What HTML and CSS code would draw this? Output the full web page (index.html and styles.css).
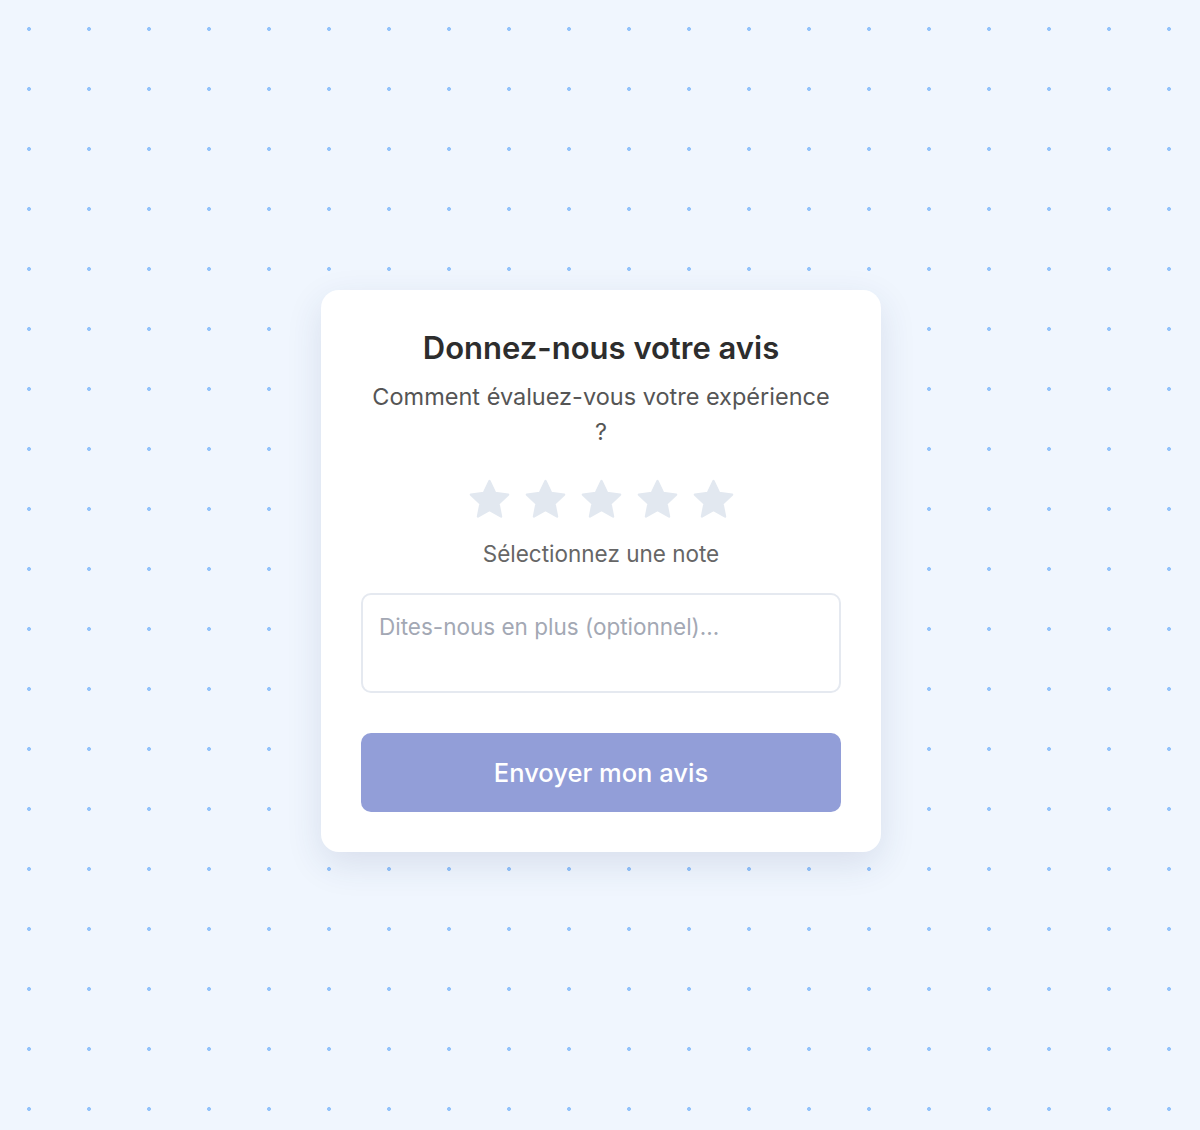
FILE: index.html
```html
<!DOCTYPE html>
<html lang="fr">
<head>
<meta charset="utf-8">
<title>Donnez-nous votre avis</title>
<link rel="stylesheet" href="styles.css">
</head>
<body>
<main class="page">
  <section class="card">
    <h1 class="title">Donnez-nous votre avis</h1>
    <p class="subtitle">Comment évaluez-vous votre expérience ?</p>
    <div class="stars">
      <svg class="star" viewBox="0 0 24 24"><path d="M12 2.6l2.9 6.1 6.6.8-4.9 4.6 1.3 6.6L12 17.4l-5.9 3.3 1.3-6.6-4.9-4.6 6.6-.8z"/></svg>
      <svg class="star" viewBox="0 0 24 24"><path d="M12 2.6l2.9 6.1 6.6.8-4.9 4.6 1.3 6.6L12 17.4l-5.9 3.3 1.3-6.6-4.9-4.6 6.6-.8z"/></svg>
      <svg class="star" viewBox="0 0 24 24"><path d="M12 2.6l2.9 6.1 6.6.8-4.9 4.6 1.3 6.6L12 17.4l-5.9 3.3 1.3-6.6-4.9-4.6 6.6-.8z"/></svg>
      <svg class="star" viewBox="0 0 24 24"><path d="M12 2.6l2.9 6.1 6.6.8-4.9 4.6 1.3 6.6L12 17.4l-5.9 3.3 1.3-6.6-4.9-4.6 6.6-.8z"/></svg>
      <svg class="star" viewBox="0 0 24 24"><path d="M12 2.6l2.9 6.1 6.6.8-4.9 4.6 1.3 6.6L12 17.4l-5.9 3.3 1.3-6.6-4.9-4.6 6.6-.8z"/></svg>
    </div>
    <p class="hint">Sélectionnez une note</p>
    <textarea class="comment" placeholder="Dites-nous en plus (optionnel)..."></textarea>
    <button class="submit" type="button">Envoyer mon avis</button>
  </section>
</main>
</body>
</html>
```
FILE: styles.css
```css
html, body {
  margin: 0;
  padding: 0;
}
body {
  font-family: Inter, "Noto Sans", sans-serif;
  background-color: #f0f6fe;
  background-image: radial-gradient(circle at center, #93c3fb 1.8px, transparent 2.2px);
  background-size: 60px 60px;
  background-position: -1px -1px;
  min-height: 100vh;
}
.page {
  min-height: 1130px;
  box-sizing: border-box;
  padding: 290px 0 0 321px;
}
.card {
  width: 560px;
  box-sizing: border-box;
  background: #fff;
  border-radius: 18px;
  padding: 40px;
  box-shadow: 0 12px 36px rgba(40, 60, 110, 0.12);
  display: flex;
  flex-direction: column;
  align-items: stretch;
  text-align: center;
}
.title {
  margin: 0;
  font-size: 31px;
  line-height: 36px;
  font-weight: 600;
  color: #2d2d2d;
}
.subtitle {
  margin: 13px 0 0;
  padding: 0 6px;
  font-size: 23.5px;
  line-height: 35px;
  color: #555;
}
.stars {
  margin-top: 27px;
  display: flex;
  justify-content: center;
  gap: 9px;
}
.star {
  width: 47px;
  height: 47px;
  display: block;
}
.star path {
  fill: #e2e8f0;
  stroke: #e2e8f0;
  stroke-width: 1.2;
  stroke-linejoin: round;
}
.hint {
  margin: 16px 0 0;
  font-size: 22.5px;
  line-height: 30px;
  color: #666;
}
.comment {
  margin-top: 24px;
  height: 100px;
  box-sizing: border-box;
  border: 2px solid #e5e9f0;
  border-radius: 10px;
  padding: 18px 16px 16px;
  font-family: Inter, "Noto Sans", sans-serif;
  font-size: 22.5px;
  line-height: 28px;
  color: #333;
  resize: none;
  outline: none;
}
.comment::placeholder {
  color: #a3a8b4;
}
.submit {
  margin-top: 40px;
  height: 79px;
  border: none;
  border-radius: 10px;
  background: #929ed8;
  color: #fff;
  font-family: Inter, "Noto Sans", sans-serif;
  font-size: 25.5px;
  font-weight: 500;
}
```
